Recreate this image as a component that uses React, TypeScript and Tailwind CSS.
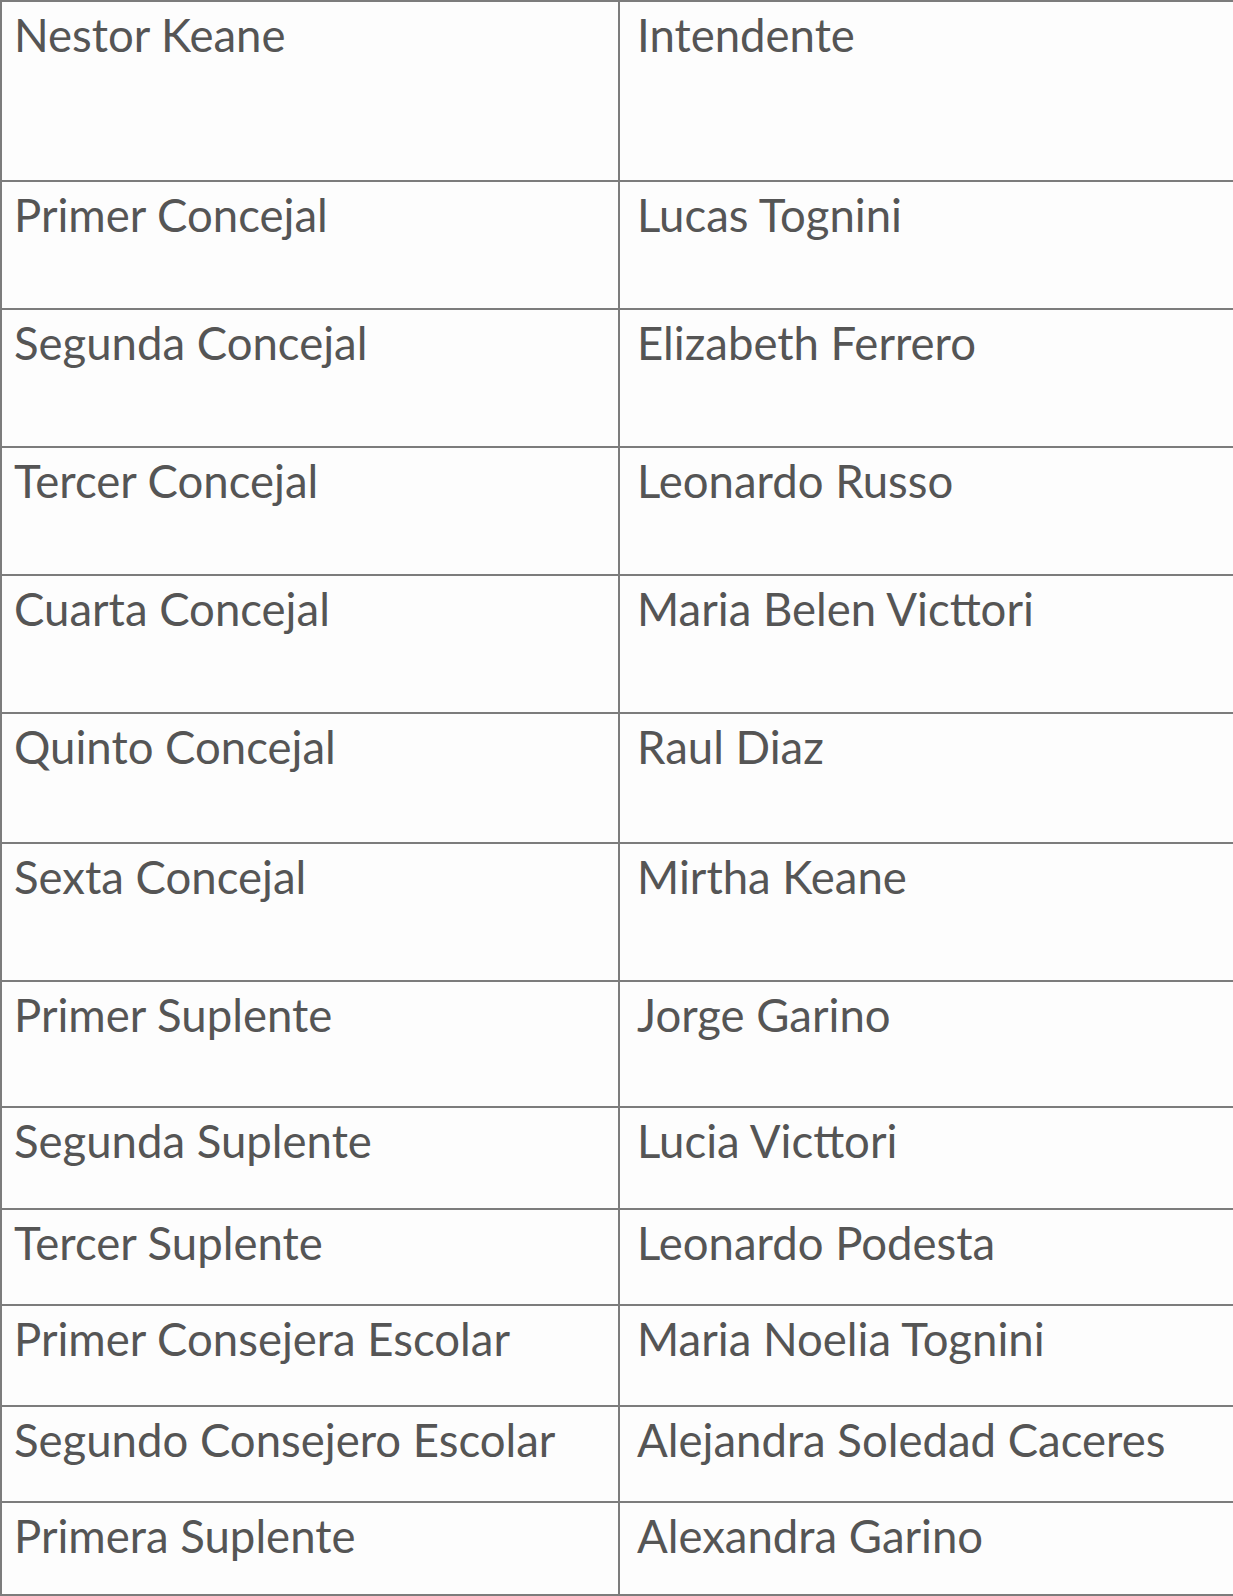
const rows = [
    { role: 'Nestor Keane',              name: 'Intendente',                h: 'h-[180px]' },
    { role: 'Primer Concejal',           name: 'Lucas Tognini',             h: 'h-[128px]' },
    { role: 'Segunda Concejal',          name: 'Elizabeth Ferrero',         h: 'h-[138px]' },
    { role: 'Tercer Concejal',           name: 'Leonardo Russo',            h: 'h-[128px]' },
    { role: 'Cuarta Concejal',           name: 'Maria Belen Victtori',      h: 'h-[138px]' },
    { role: 'Quinto Concejal',           name: 'Raul Diaz',                 h: 'h-[130px]' },
    { role: 'Sexta Concejal',            name: 'Mirtha Keane',              h: 'h-[138px]' },
    { role: 'Primer Suplente',           name: 'Jorge Garino',              h: 'h-[126px]' },
    { role: 'Segunda Suplente',          name: 'Lucia Victtori',            h: 'h-[102px]' },
    { role: 'Tercer Suplente',           name: 'Leonardo Podesta',          h: 'h-[96px]' },
    { role: 'Primer Consejera Escolar',  name: 'Maria Noelia Tognini',      h: 'h-[101px]' },
    { role: 'Segundo Consejero Escolar', name: 'Alejandra Soledad Caceres', h: 'h-[96px]' },
    { role: 'Primera Suplente',          name: 'Alexandra Garino',          h: 'h-[93px]' },
];

const App = () => {
    return (
        <div className="min-h-screen w-[1233px] bg-[#fdfdfd] font-['Lato',sans-serif] text-[#555555]">
            <div className="border-t-2 border-l-2 border-[#7c7c7c]">
                {rows.map((row) => (
                    <div key={row.role} className={`flex border-b-2 border-[#7c7c7c] ${row.h}`}>
                        <div className="w-[618px] shrink-0 border-r-2 border-[#7c7c7c] pl-[12px] pt-[10px] text-[45.5px] leading-[46px]">
                            {row.role}
                        </div>
                        <div className="flex-1 pl-[17px] pt-[10px] text-[45.5px] leading-[46px]">
                            {row.name}
                        </div>
                    </div>
                ))}
            </div>
        </div>
    );
};

export default App;
